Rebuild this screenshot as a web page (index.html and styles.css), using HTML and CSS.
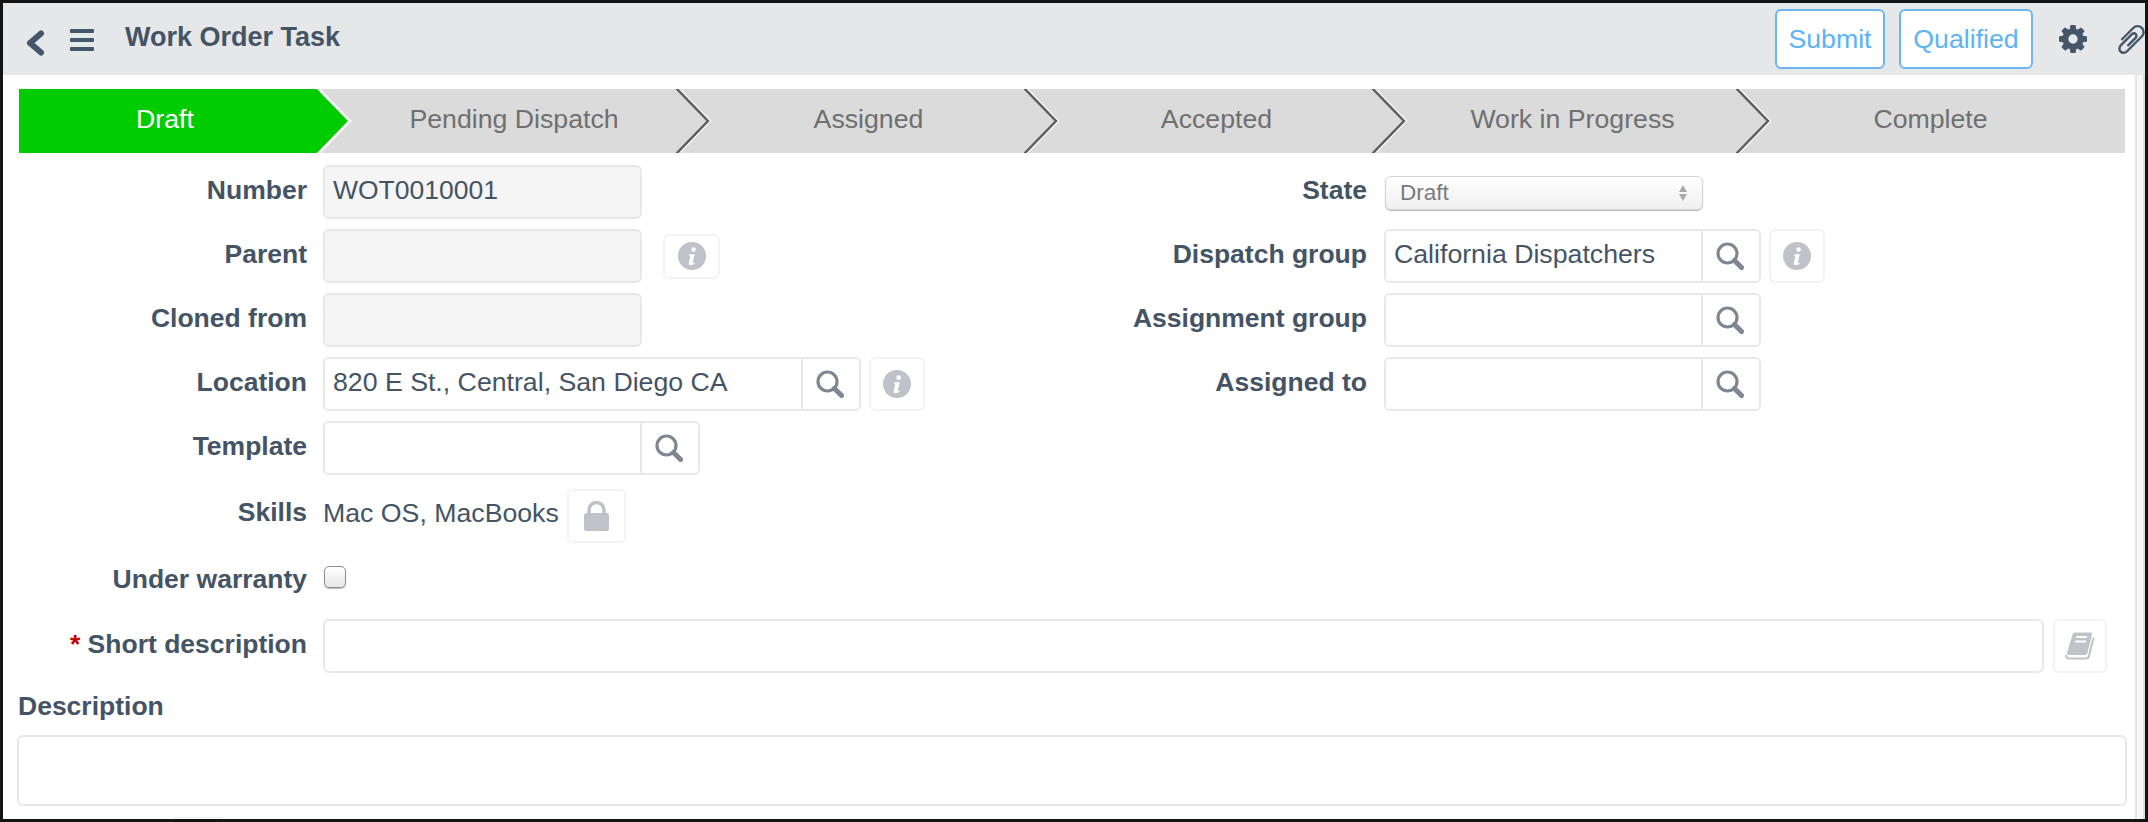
FILE: index.html
```html
<!DOCTYPE html>
<html lang="en">
<head>
    <meta charset="UTF-8">
    <title>Work Order Task</title>
    <link rel="stylesheet" href="styles.css">
</head>
<body>
    <svg class="defs" width="0" height="0">
        <symbol id="icon-search" viewBox="0 0 28 28">
            <circle cx="11.5" cy="11.5" r="9.5" fill="none" stroke="currentColor" stroke-width="3.2"/>
            <path d="M18.5 18.5l7 7" stroke="currentColor" stroke-width="5" stroke-linecap="round"/>
        </symbol>
        <symbol id="icon-info" viewBox="0 0 28 28">
            <circle cx="14" cy="14" r="14" fill="currentColor"/>
            <circle cx="15.6" cy="7.6" r="2.3" fill="#fff"/>
            <path d="M11.2 12.2h5.6l-2 8.2q-.2 1 .9.7l1.2-.5-.3 1.500q-2.200 1.100-4 1.100-2.300 0-1.800-2.200l1.500-6.700h-1z" fill="#fff"/>
        </symbol>
    </svg>

    <div class="frame">
        <header class="topbar">
            <svg class="back" width="20" height="26" viewBox="0 0 20 26"><polyline points="16,3.500 5,13 16,22.500" fill="none" stroke="#46566a" stroke-width="6" stroke-linecap="round" stroke-linejoin="round"/></svg>
            <div class="burger"><span></span><span></span><span></span></div>
            <h1 class="title">Work Order Task</h1>
            <div class="actions">
                <button class="btn">Submit</button>
                <button class="btn btn-wide">Qualified</button>
                <svg class="gear" width="28" height="28" viewBox="128 128 1536 1536"><path fill="#46566a" d="M1152 896q0-106-75-181t-181-75-181 75-75 181 75 181 181 75 181-75 75-181zm512-109v222q0 12-8 23t-20 13l-185 28q-19 54-39 91 35 50 107 138 10 12 10 25t-9 23q-27 37-99 108t-94 71q-12 0-26-9l-138-108q-44 23-91 38-16 136-29 186-7 28-36 28h-222q-14 0-24.500-8.500t-11.500-21.500l-28-184q-49-16-90-37l-141 107q-10 9-25 9-14 0-25-11-126-114-165-168-7-10-7-23 0-12 8-23 15-21 51-66.500t54-70.500q-27-50-41-99l-183-27q-13-2-21-12.500t-8-23.500v-222q0-12 8-23t19-13l186-28q14-46 39-92-40-57-107-138-10-12-10-24 0-10 9-23 26-36 98.500-107.500t94.500-71.500q13 0 26 10l138 107q44-23 91-38 16-136 29-186 7-28 36-28h222q14 0 24.500 8.500t11.500 21.500l28 184q49 16 90 37l142-107q9-9 24-9 13 0 25 10 129 119 165 170 7 8 7 22 0 12-8 23-15 21-51 66.500t-54 70.500q26 50 41 98l183 28q13 2 21 12.500t8 23.500z"/></svg>
                <svg class="clip" width="27" height="29" viewBox="196 132 1400 1528"><path transform="translate(1792 0) scale(-1 1)" fill="#46566a" d="M1596 1385q0 117-79 196t-196 79q-135 0-235-100l-777-776q-113-115-113-271 0-159 110-270t269-111q158 0 273 113l605 606q10 10 10 22 0 16-30.500 46.500t-46.500 30.500q-13 0-23-10l-606-607q-79-77-181-77-106 0-179 75t-73 181q0 105 76 181l776 777q63 63 145 63 64 0 106-42t42-106q0-82-63-145l-581-581q-26-24-60-24-29 0-48 19t-19 48q0 32 25 59l410 410q10 10 10 22 0 16-31 47t-47 31q-12 0-22-10l-410-410q-63-61-63-149 0-82 57-139t139-57q88 0 149 63l581 581q100 98 100 235z"/></svg>
            </div>
        </header>

        <div class="page">
            <main class="content">
                <div class="pipeline">
                    <div class="step step-active">Draft
                        <svg class="arrow" width="36" height="64" viewBox="0 0 36 64"><polygon points="0,0 31,32 0,64" fill="#00cc00" stroke="none"/><polyline points="1,-1 33,32 1,65" fill="none" stroke="#fff" stroke-width="2.500"/></svg>
                    </div>
                    <div class="step">Pending Dispatch
                        <svg class="arrow arrow-plain" width="36" height="64" viewBox="0 0 36 64"><polyline points="2,-1 34,32 2,65" fill="none" stroke="#fff" stroke-width="2"/><polyline points="0,-1 32,32 0,65" fill="none" stroke="#5f5f5f" stroke-width="2.500"/></svg>
                    </div>
                    <div class="step">Assigned
                        <svg class="arrow arrow-plain" width="36" height="64" viewBox="0 0 36 64"><polyline points="2,-1 34,32 2,65" fill="none" stroke="#fff" stroke-width="2"/><polyline points="0,-1 32,32 0,65" fill="none" stroke="#5f5f5f" stroke-width="2.500"/></svg>
                    </div>
                    <div class="step">Accepted
                        <svg class="arrow arrow-plain" width="36" height="64" viewBox="0 0 36 64"><polyline points="2,-1 34,32 2,65" fill="none" stroke="#fff" stroke-width="2"/><polyline points="0,-1 32,32 0,65" fill="none" stroke="#5f5f5f" stroke-width="2.500"/></svg>
                    </div>
                    <div class="step">Work in Progress
                        <svg class="arrow arrow-plain" width="36" height="64" viewBox="0 0 36 64"><polyline points="2,-1 34,32 2,65" fill="none" stroke="#fff" stroke-width="2"/><polyline points="0,-1 32,32 0,65" fill="none" stroke="#5f5f5f" stroke-width="2.500"/></svg>
                    </div>
                    <div class="step step-last">Complete</div>
                </div>

                <div class="columns">
                    <div>
                        <div class="field">
                            <label class="label">Number</label>
                            <input class="input input-readonly" value="WOT0010001" readonly>
                        </div>
                        <div class="field">
                            <label class="label">Parent</label>
                            <input class="input input-readonly" readonly>
                            <button class="icon-btn icon-btn-short"><svg class="icon-info" width="28" height="28"><use href="#icon-info"/></svg></button>
                        </div>
                        <div class="field">
                            <label class="label">Cloned from</label>
                            <input class="input input-readonly" readonly>
                        </div>
                        <div class="field">
                            <label class="label">Location</label>
                            <div class="lookup lookup-wide">
                                <input class="lookup-input" value="820 E St., Central, San Diego CA">
                                <button class="lookup-btn"><svg width="28" height="28"><use href="#icon-search"/></svg></button>
                            </div>
                            <button class="icon-btn"><svg class="icon-info" width="28" height="28"><use href="#icon-info"/></svg></button>
                        </div>
                    </div>
                    <div class="column-right">
                        <div class="field">
                            <label class="label">State</label>
                            <div class="select">Draft
                                <span class="select-arrows"></span>
                            </div>
                        </div>
                        <div class="field">
                            <label class="label">Dispatch group</label>
                            <div class="lookup">
                                <input class="lookup-input" value="California Dispatchers">
                                <button class="lookup-btn"><svg width="28" height="28"><use href="#icon-search"/></svg></button>
                            </div>
                            <button class="icon-btn"><svg class="icon-info" width="28" height="28"><use href="#icon-info"/></svg></button>
                        </div>
                        <div class="field">
                            <label class="label">Assignment group</label>
                            <div class="lookup">
                                <input class="lookup-input">
                                <button class="lookup-btn"><svg width="28" height="28"><use href="#icon-search"/></svg></button>
                            </div>
                        </div>
                        <div class="field">
                            <label class="label">Assigned to</label>
                            <div class="lookup">
                                <input class="lookup-input">
                                <button class="lookup-btn"><svg width="28" height="28"><use href="#icon-search"/></svg></button>
                            </div>
                        </div>
                    </div>
                </div>

                <div class="field field-template">
                    <label class="label">Template</label>
                    <div class="lookup">
                        <input class="lookup-input">
                        <button class="lookup-btn"><svg width="28" height="28"><use href="#icon-search"/></svg></button>
                    </div>
                </div>
                <div class="field field-skills">
                    <label class="label">Skills</label>
                    <span class="value">Mac OS, MacBooks</span>
                    <button class="icon-btn icon-btn-lock">
                        <svg width="25" height="30" viewBox="0 0 25 30"><path d="M5 14V9a7.500 7.500 0 0 1 15 0v5" fill="none" stroke="#bfc3c9" stroke-width="3.500"/><rect y="12" width="25" height="18" rx="2.500" fill="#bfc3c9"/></svg>
                    </button>
                </div>
                <div class="field field-warranty">
                    <label class="label">Under warranty</label>
                    <input class="checkbox" type="checkbox">
                </div>
                <div class="field field-short">
                    <label class="label"><span class="required">*</span> Short description</label>
                    <input class="input input-full">
                    <button class="icon-btn icon-btn-book">
                        <svg width="30" height="30" viewBox="0 0 30 30"><path d="M7.500 3.500Q8 1.500 10 1.500h15.500q2 0 1.500 2L22.500 22q-.5 2-2.500 2H4.500Q1 24 2 22z" fill="#bfc3c9"/><path d="M28.500 6.500L24 25q-.5 2.500-3 2.500H4q-3 0-3-3.500" fill="none" stroke="#bfc3c9" stroke-width="2"/><path d="M11 6h11M10 10.500h11" stroke="#fff" stroke-width="2"/></svg>
                    </button>
                </div>

                <div class="description-label">Description</div>
                <textarea class="description"></textarea>
                <div class="next-peek"></div>
            </main>
            <div class="scrollbar"></div>
        </div>
    </div>
</body>
</html>
```

FILE: styles.css
```css
* {
    box-sizing: border-box;
}
html, body {
    margin: 0;
    height: 100%;
}
body {
    font-family: "Liberation Sans", Arial, sans-serif;
    color: #455464;
    background: #fff;
}
.defs {
    position: absolute;
}
.frame {
    height: 822px;
    border: 3px solid #141414;
    display: flex;
    flex-direction: column;
    overflow: hidden;
}

/* top bar */
.topbar {
    flex: none;
    height: 72px;
    background-color: #e6e7e9;
    display: flex;
    align-items: center;
    padding-left: 22px;
    overflow: hidden;
}
.back {
    margin-top: 8px;
}
.burger {
    width: 24px;
    display: flex;
    flex-direction: column;
    gap: 5px;
    margin-left: 25px;
    margin-top: 2px;
}
.burger span {
    height: 4px;
    border-radius: 1px;
    background-color: #46566a;
}
.title {
    margin: 0 0 4px 31px;
    font-size: 27px;
    font-weight: bold;
}
.actions {
    margin-left: auto;
    display: flex;
    align-items: center;
}
.btn {
    width: 110px;
    height: 60px;
    margin-right: 14px;
    padding: 0;
    background-color: #fff;
    border: 2px solid #6cb7f2;
    border-radius: 6px;
    color: #5cb3f5;
    font-family: inherit;
    font-size: 26.7px;
}
.btn-wide {
    width: 134px;
    margin-right: 26px;
}
.clip {
    margin-left: 31px;
    display: block;
}

/* page */
.page {
    flex: 1;
    display: flex;
    min-height: 0;
}
.content {
    flex: 1;
    min-width: 0;
}
.scrollbar {
    flex: none;
    width: 10px;
    background-color: #f6f6f6;
    border-left: 2px solid #e4e4e4;
    border-right: 2px solid #dedede;
}

/* pipeline */
.pipeline {
    display: grid;
    grid-template-columns: 298px 361px 348px 348px 364px 1fr;
    height: 64px;
    margin: 14px 10px 12px 16px;
    background-color: #dbdbdb;
    overflow: hidden;
}
.step {
    position: relative;
    display: flex;
    align-items: center;
    justify-content: center;
    padding: 0 0 3px 33px;
    font-size: 26.7px;
    color: #6f6f6f;
}
.step-active {
    background-color: #00cc00;
    color: #fff;
    padding: 0 6px 3px 0;
}
.step-last {
    padding: 0 2px 3px 0;
}
.arrow {
    position: absolute;
    top: 0;
    left: 100%;
    z-index: 1;
}
.arrow-plain {
    margin-left: -2px;
}

/* form */
.columns {
    display: grid;
    grid-template-columns: 930px 1fr;
}
.field {
    display: flex;
    align-items: center;
    height: 54px;
    margin-bottom: 10px;
}
.label {
    flex: none;
    width: 304px;
    margin-right: 16px;
    padding-bottom: 4px;
    text-align: right;
    font-size: 26.5px;
    font-weight: bold;
}
.column-right .label {
    width: 434px;
    margin-right: 17px;
}
.required {
    color: #c00000;
}
.input {
    flex: none;
    width: 319px;
    height: 54px;
    padding: 0 8px 3px;
    border: 2px solid #e8e8e8;
    border-radius: 6px;
    font-family: inherit;
    font-size: 26.5px;
    color: #455464;
    background: #fff;
    outline: none;
}
.input-readonly {
    background-color: #f5f5f5;
}
.input-full {
    width: 1721px;
}
.lookup {
    flex: none;
    display: flex;
    width: 377px;
    height: 54px;
    border: 2px solid #e8e8e8;
    border-radius: 6px;
    overflow: hidden;
}
.lookup-wide {
    width: 538px;
}
.lookup-input {
    flex: 1;
    min-width: 0;
    padding: 0 8px 3px;
    border: 0;
    font-family: inherit;
    font-size: 26.7px;
    color: #455464;
    outline: none;
}
.lookup-btn {
    flex: none;
    width: 58px;
    padding: 0 3px 0 0;
    display: flex;
    align-items: center;
    justify-content: center;
    background: #fff;
    border: 0;
    border-left: 2px solid #e8e8e8;
    color: #7e8791;
}
.icon-btn {
    flex: none;
    width: 56px;
    height: 54px;
    margin-left: 8px;
    padding: 0;
    display: flex;
    align-items: center;
    justify-content: center;
    background: #fff;
    border: 2px solid #f3f3f3;
    border-radius: 6px;
}
.icon-btn-short {
    width: 57px;
    height: 45px;
    margin-left: 21px;
}
.icon-info {
    color: #bfc3c9;
}
.icon-btn-lock {
    width: 59px;
}
.icon-btn-book {
    width: 54px;
    margin-left: 9px;
}
.field-template {
    margin-bottom: 14px;
}
.value {
    padding-bottom: 6px;
    font-size: 26.7px;
}
.field-skills .label {
    padding-bottom: 8px;
}
.field-warranty {
    height: 56px;
    margin-bottom: 10px;
}
.select {
    position: relative;
    width: 318px;
    height: 34px;
    margin-left: 1px;
    margin-top: 2px;
    padding-left: 14px;
    line-height: 32px;
    font-size: 22.5px;
    color: #7b7b7b;
    background: linear-gradient(#ffffff, #f0f0f0);
    border: 1px solid #d4d4d4;
    border-radius: 6px;
    box-shadow: 0 1px 1px #b5b5b5;
}
.select-arrows {
    position: absolute;
    top: 8px;
    right: 15px;
    width: 0;
    height: 7px;
    border-left: 4px solid transparent;
    border-right: 4px solid transparent;
    border-bottom: 7px solid #a9a9a9;
}
.select-arrows::after {
    content: "";
    position: absolute;
    top: 9px;
    left: -4px;
    border-left: 4px solid transparent;
    border-right: 4px solid transparent;
    border-top: 7px solid #a9a9a9;
}
.checkbox {
    appearance: none;
    width: 22px;
    height: 22px;
    margin: 0 0 8px 1px;
    border: 1px solid #8f8f8f;
    border-radius: 5px;
    background: linear-gradient(#ffffff, #e6e6e6);
    box-shadow: 0 1px 1px #bbb;
}
.description-label {
    margin: 19px 0 15px 15px;
    line-height: 28px;
    font-size: 26.5px;
    font-weight: bold;
}
.description {
    display: block;
    width: 2110px;
    height: 71px;
    margin-left: 14px;
    border: 2px solid #e8e8e8;
    border-radius: 6px;
    resize: none;
    outline: none;
}
.next-peek {
    width: 50px;
    height: 4px;
    margin: 11px 0 0 170px;
    border-top: 1px solid #eee;
}
```
